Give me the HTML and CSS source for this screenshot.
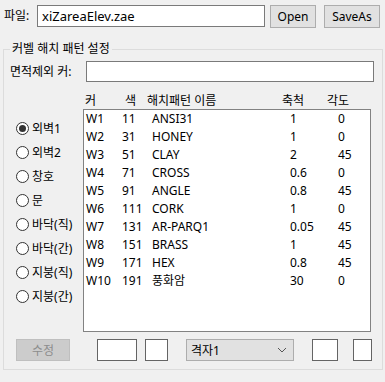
FILE: index.html
```html
<!DOCTYPE html>
<html lang="ko">
<head>
  <meta charset="UTF-8">
  <meta name="viewport" content="width=device-width, initial-scale=1.0">
  <title>커벨 해치 패턴 설정</title>
  <link rel="stylesheet" href="styles.css">
</head>
<body>
  <div class="file-row">
    <label class="file-label" for="filePath">파일:</label>
    <input type="text" id="filePath" class="file-input" value="xiZareaElev.zae">
    <button class="btn btn-open">Open</button>
    <button class="btn btn-save">SaveAs</button>
  </div>

  <fieldset class="group">
    <legend>커벨 해치 패턴 설정</legend>

    <div class="exclude-row">
      <label for="exclude">면적제외 커:</label>
      <input type="text" id="exclude" class="exclude-input">
    </div>

    <div class="main">
      <div class="radios">
        <label class="radio"><span class="dot checked"></span>외벽1</label>
        <label class="radio"><span class="dot"></span>외벽2</label>
        <label class="radio"><span class="dot"></span>창호</label>
        <label class="radio"><span class="dot"></span>문</label>
        <label class="radio"><span class="dot"></span>바닥(직)</label>
        <label class="radio"><span class="dot"></span>바닥(간)</label>
        <label class="radio"><span class="dot"></span>지붕(직)</label>
        <label class="radio"><span class="dot"></span>지붕(간)</label>
      </div>

      <div class="table">
        <div class="head">
          <span>커</span><span>색</span><span>해치패턴 이름</span><span>축척</span><span>각도</span>
        </div>
        <div class="list">
          <div class="row"><span>W1</span><span>11</span><span>ANSI31</span><span>1</span><span>0</span></div>
          <div class="row"><span>W2</span><span>31</span><span>HONEY</span><span>1</span><span>0</span></div>
          <div class="row"><span>W3</span><span>51</span><span>CLAY</span><span>2</span><span>45</span></div>
          <div class="row"><span>W4</span><span>71</span><span>CROSS</span><span>0.6</span><span>0</span></div>
          <div class="row"><span>W5</span><span>91</span><span>ANGLE</span><span>0.8</span><span>45</span></div>
          <div class="row"><span>W6</span><span>111</span><span>CORK</span><span>1</span><span>0</span></div>
          <div class="row"><span>W7</span><span>131</span><span>AR-PARQ1</span><span>0.05</span><span>45</span></div>
          <div class="row"><span>W8</span><span>151</span><span>BRASS</span><span>1</span><span>45</span></div>
          <div class="row"><span>W9</span><span>171</span><span>HEX</span><span>0.8</span><span>45</span></div>
          <div class="row"><span>W10</span><span>191</span><span>풍화암</span><span>30</span><span>0</span></div>
        </div>
      </div>
    </div>

    <div class="bottom-row">
      <button class="btn btn-edit" disabled>수정</button>
      <div class="box box-1"></div>
      <div class="box box-2"></div>
      <div class="combo">
        <span>격자1</span>
        <svg width="10" height="6" viewBox="0 0 10 6"><path d="M1 1 L5 5 L9 1" fill="none" stroke="#555" stroke-width="1"/></svg>
      </div>
      <div class="box box-3"></div>
      <div class="box box-4"></div>
    </div>
  </fieldset>
</body>
</html>
```

FILE: styles.css
```css
body {
  margin: 0;
  background-color: #f0f0f0;
  font-family: "Noto Sans", "Noto Sans CJK KR", sans-serif;
  font-size: 12px;
  color: #000;
  width: 385px;
  height: 382px;
  overflow: hidden;
}

input, button {
  font-family: inherit;
  font-size: 12px;
  box-sizing: border-box;
  margin: 0;
}

.file-row {
  display: flex;
  align-items: flex-start;
  padding: 5px 0 0 4px;
  height: 23px;
}

.file-label {
  width: 33px;
  line-height: 21px;
}

.file-input {
  width: 228px;
  height: 22px;
  border: 1px solid #7a7a7a;
  background: #fff;
  padding: 0 4px;
  font-size: 13px;
}

.btn {
  height: 23px;
  background: #e1e1e1;
  border: 1px solid #adadad;
  padding: 0;
  color: #000;
}

.btn-open {
  width: 46px;
  margin-left: 5px;
}

.btn-save {
  width: 56px;
  margin-left: 8px;
}

.group {
  margin: 13px 0 0 3px;
  width: 380px;
  height: 329px;
  box-sizing: border-box;
  border: 1px solid #dcdcdc;
  padding: 0;
}

.group legend {
  margin-left: 6px;
  padding: 0 2px;
  line-height: 16px;
}

.exclude-row {
  display: flex;
  margin-top: 4px;
  height: 21px;
}

.exclude-row label {
  margin-left: 6px;
  width: 76px;
  line-height: 21px;
}

.exclude-input {
  width: 288px;
  height: 21px;
  border: 1px solid #7a7a7a;
  background: #fff;
}

.main {
  display: flex;
  margin-top: 11px;
}

.radios {
  width: 79px;
  padding-top: 23px;
}

.radio {
  display: flex;
  align-items: center;
  height: 24px;
  padding-left: 12px;
}

.dot {
  width: 13px;
  height: 13px;
  box-sizing: border-box;
  border: 1px solid #333;
  border-radius: 50%;
  background: #fff;
  margin-right: 3px;
  position: relative;
}

.dot.checked::after {
  content: "";
  position: absolute;
  left: 2px;
  top: 2px;
  width: 7px;
  height: 7px;
  border-radius: 50%;
  background: #333;
}

.head {
  display: grid;
  grid-template-columns: 40px 22px 135px 45px 40px;
  padding-left: 2px;
  line-height: 16px;
}

.list {
  width: 288px;
  height: 223px;
  box-sizing: border-box;
  border: 1px solid #828282;
  background: #fff;
  margin-top: 0;
  padding: 0 0 0 2px;
}

.row {
  display: grid;
  grid-template-columns: 36px 30px 138px 48px 40px;
  line-height: 18px;
}

.bottom-row {
  display: flex;
  margin-top: 7px;
  height: 22px;
}

.btn-edit {
  width: 54px;
  height: 22px;
  margin-left: 12px;
  background: #cccccc;
  border-color: #bfbfbf;
  color: #8d8d8d;
}

.box {
  height: 22px;
  box-sizing: border-box;
  border: 1px solid #646464;
  background: #fff;
}

.box-1 { width: 40px; margin-left: 27px; }
.box-2 { width: 23px; margin-left: 8px; }
.box-3 { width: 26px; margin-left: 18px; }
.box-4 { width: 19px; margin-left: 15px; }

.combo {
  width: 108px;
  height: 22px;
  margin-left: 18px;
  box-sizing: border-box;
  border: 1px solid #adadad;
  background: #e1e1e1;
  display: flex;
  align-items: center;
  justify-content: space-between;
  padding: 0 6px 0 4px;
}
```
